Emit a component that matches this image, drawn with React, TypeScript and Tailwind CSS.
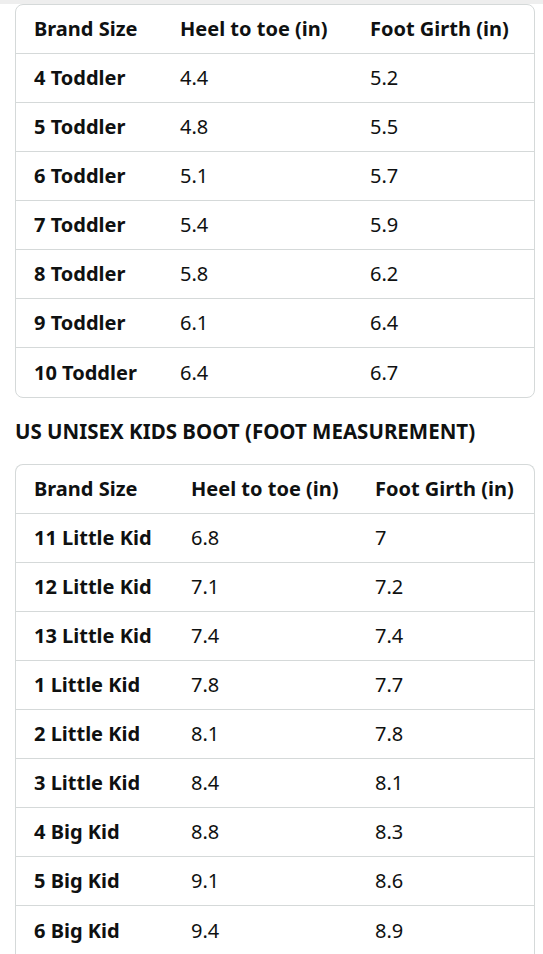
import React from "react";

const font = { fontFamily: '"Noto Sans", "Open Sans", Arial, sans-serif' };

const toddler: [string, string, string][] = [
  ["4 Toddler", "4.4", "5.2"],
  ["5 Toddler", "4.8", "5.5"],
  ["6 Toddler", "5.1", "5.7"],
  ["7 Toddler", "5.4", "5.9"],
  ["8 Toddler", "5.8", "6.2"],
  ["9 Toddler", "6.1", "6.4"],
  ["10 Toddler", "6.4", "6.7"],
];

const kids: [string, string, string][] = [
  ["11 Little Kid", "6.8", "7"],
  ["12 Little Kid", "7.1", "7.2"],
  ["13 Little Kid", "7.4", "7.4"],
  ["1 Little Kid", "7.8", "7.7"],
  ["2 Little Kid", "8.1", "7.8"],
  ["3 Little Kid", "8.4", "8.1"],
  ["4 Big Kid", "8.8", "8.3"],
  ["5 Big Kid", "9.1", "8.6"],
  ["6 Big Kid", "9.4", "8.9"],
];

function Row({
  cells,
  header,
  cols,
  last,
}: {
  cells: [string, string, string];
  header?: boolean;
  cols: string;
  last?: boolean;
}) {
  return (
    <div
      className={`grid ${cols} h-[49px] items-center ${last ? "" : "border-b border-[#d5d9d9]"} text-[20px] text-[#0f1111]`}
    >
      <div className="pl-[18px] font-bold whitespace-nowrap">{cells[0]}</div>
      <div className={`whitespace-nowrap ${header ? "font-bold" : ""}`}>{cells[1]}</div>
      <div className={`whitespace-nowrap ${header ? "font-bold" : ""}`}>{cells[2]}</div>
    </div>
  );
}

export default function App() {
  return (
    <div className="w-[543px] h-[954px] overflow-hidden bg-white flex flex-col" style={font}>
      <div className="h-[4px] bg-[#eeeeee] shrink-0" />
      <div className="pl-[15px] pr-[8px]">
        <div className="border border-[#d5d9d9] rounded-[8px]">
          <Row cols="grid-cols-[164px_190px_1fr]" header cells={["Brand Size", "Heel to toe (in)", "Foot Girth (in)"]} />
          {toddler.map((r, i) => (
            <Row key={r[0]} cols="grid-cols-[164px_190px_1fr]" cells={r} last={i === toddler.length - 1} />
          ))}
        </div>
        <div className="mt-[19px] mb-[19px] h-[28px] flex items-center text-[20.5px] font-bold text-[#0f1111] whitespace-nowrap">
          US UNISEX KIDS BOOT (FOOT MEASUREMENT)
        </div>
        <div className="border-t border-x border-[#d5d9d9] rounded-t-[8px]">
          <Row cols="grid-cols-[175px_184px_1fr]" header cells={["Brand Size", "Heel to toe (in)", "Foot Girth (in)"]} />
          {kids.map((r, i) => (
            <Row key={r[0]} cols="grid-cols-[175px_184px_1fr]" cells={r} last={i === kids.length - 1} />
          ))}
        </div>
      </div>
      <div className="h-[1px] bg-[#d5d9d9] shrink-0" />
    </div>
  );
}
